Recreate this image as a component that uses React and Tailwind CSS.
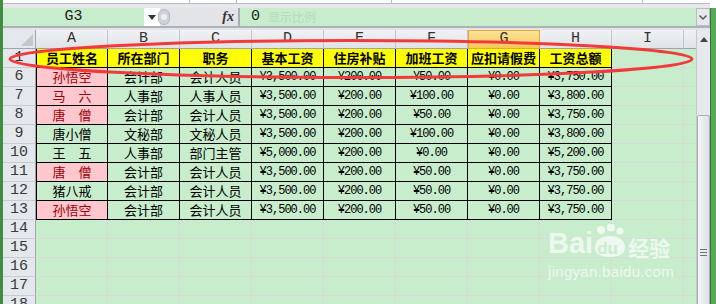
import React from "react";

const cols = ["A", "B", "C", "D", "E", "F", "G", "H", "I"];
const headers = ["员工姓名", "所在部门", "职务", "基本工资", "住房补贴", "加班工资", "应扣请假费", "工资总额"];

const rows = [
  [6, "孙悟空", true, "会计部", "会计人员", "¥3,500.00", "¥200.00", "¥50.00", "¥0.00", "¥3,750.00"],
  [7, "马　六", true, "人事部", "人事人员", "¥3,500.00", "¥200.00", "¥100.00", "¥0.00", "¥3,800.00"],
  [8, "唐　僧", true, "会计部", "会计人员", "¥3,500.00", "¥200.00", "¥50.00", "¥0.00", "¥3,750.00"],
  [9, "唐小僧", false, "文秘部", "文秘人员", "¥3,500.00", "¥200.00", "¥100.00", "¥0.00", "¥3,800.00"],
  [10, "王　五", false, "人事部", "部门主管", "¥5,000.00", "¥200.00", "¥0.00", "¥0.00", "¥5,200.00"],
  [11, "唐　僧", true, "会计部", "会计人员", "¥3,500.00", "¥200.00", "¥50.00", "¥0.00", "¥3,750.00"],
  [12, "猪八戒", false, "会计部", "会计人员", "¥3,500.00", "¥200.00", "¥50.00", "¥0.00", "¥3,750.00"],
  [13, "孙悟空", true, "会计部", "会计人员", "¥3,500.00", "¥200.00", "¥50.00", "¥0.00", "¥3,750.00"],
];

const cjk = "font-['Noto_Sans_CJK_SC',sans-serif]";
const mono = "font-['Liberation_Mono',monospace]";

const RowHead = ({ n }) => (
  <div className={`flex items-center justify-center bg-[#e4e7eb] border-r border-b border-r-[#9ea4ac] border-b-[#c8ccd2] text-[15px] text-[#3a3a3a] ${mono}`}>
    {n}
  </div>
);

const Empty = () => <div className="bg-[#c7edcc] border-r border-b border-[#d7dbd8]" />;

const Edge = () => <div className="bg-[#c7edcc] border-b border-[#d7dbd8]" />;

const App = () => {
  return (
    <div className="relative w-[716px] h-[304px] overflow-hidden flex bg-white">
      <div className="w-[3px] shrink-0 bg-[#3f8f3f]" />

      <div className="flex flex-col w-[707px] shrink-0">
        {/* ribbon remains */}
        <div className="h-[4px] shrink-0 bg-white border-b border-[#b9bdc3] flex">
          <div className="w-[187px] border-r border-[#b9bdc3]" />
          <div className="w-[47px] border-r border-[#b9bdc3]" />
          <div className="w-[155px] border-r border-[#b9bdc3]" />
          <div className="w-[251px] border-r border-[#b9bdc3]" />
        </div>
        <div className="h-[4px] shrink-0 bg-[#e6e8eb]" />

        {/* formula bar */}
        <div className="h-[18px] shrink-0 flex bg-[#c7edcc]">
          <div className={`w-[141px] flex items-center justify-center text-[15px] text-[#222] ${mono}`}>G3</div>
          <div className="w-[16px] bg-white flex items-center justify-center">
            <svg width="8" height="5" viewBox="0 0 8 5"><path d="M0 0h8L4 5z" fill="#333" /></svg>
          </div>
          <div className="w-[78px] bg-[#e2e4e8] flex items-center">
            <div className="w-[12px] h-[16px] rounded-full bg-[#cfd2d6] border border-[#b3b7bc] -ml-[2px] flex items-center justify-center">
              <div className="w-[6px] h-[6px] rounded-full bg-[#eceef0]" />
            </div>
            <span className="ml-auto mr-[4px] font-['Liberation_Serif',serif] italic font-bold text-[14px] text-[#333] leading-none">fx</span>
          </div>
          <div className="w-[2px] bg-[#a9adb3]" />
          <div className="flex-1 flex items-center pl-[11px]">
            <span className={`text-[15px] text-[#222] ${mono}`}>0</span>
            <span className={`ml-[8px] text-[12px] text-[#b8d9bc] ${cjk}`}>显示比例</span>
          </div>
          <div className="w-[14px] bg-[#e6e8eb] border border-[#b9bdc3] flex items-center justify-center">
            <svg width="8" height="5" viewBox="0 0 8 5"><path d="M0.5 0.5L4 4L7.5 0.5" stroke="#555" strokeWidth="1.4" fill="none" /></svg>
          </div>
        </div>
        <div className="h-[4px] shrink-0 bg-[#e3e5e8] border-t-2 border-[#adb2b8]" />

        <div className="flex shrink-0">
          {/* sheet */}
          <div className="grid grid-cols-[33px_repeat(9,72px)_12px] auto-rows-[19px] w-[693px] shrink-0">
            <div className="bg-[#e4e7eb] border-r border-b border-[#9ea4ac] relative">
              <svg className="absolute right-[2px] bottom-[2px]" width="12" height="12" viewBox="0 0 12 12">
                <path d="M12 0V12H0z" fill="#c3c7cc" />
              </svg>
            </div>
            {cols.map((c) => (
              <div
                key={c}
                className={
                  c === "G"
                    ? `flex items-center justify-center bg-gradient-to-b from-[#fbe39a] to-[#f6c856] border border-[#e9a63a] text-[15px] text-[#333] ${mono}`
                    : `flex items-center justify-center bg-gradient-to-b from-[#f0f2f4] to-[#e0e3e7] border-r border-b border-r-[#c3c7cd] border-b-[#9ea4ac] text-[15px] text-[#333] ${mono}`
                }
              >
                {c}
              </div>
            ))}
            <div className="bg-gradient-to-b from-[#f0f2f4] to-[#e0e3e7] border-b border-[#9ea4ac]" />

            {/* row 1 */}
            <RowHead n={1} />
            {headers.map((h, i) => (
              <div
                key={h}
                className={`flex items-center justify-center bg-[#ffff00] border-r border-b border-black font-bold text-[13px] text-black ${cjk} ${i === 0 ? "border-l" : ""}`}
              >
                {h}
              </div>
            ))}
            <Empty />
            <Edge />

            {rows.map((r) => (
              <React.Fragment key={r[0]}>
                <RowHead n={r[0]} />
                <div
                  className={`flex items-center justify-center border-l border-r border-b border-black text-[13px] ${cjk} ${
                    r[2] ? "bg-[#ffc7ce] text-[#9c0006]" : "bg-[#c7edcc] text-black"
                  }`}
                >
                  {r[1]}
                </div>
                {r.slice(3).map((v, i) => (
                  <div
                    key={i}
                    className={`flex items-center justify-center bg-[#c7edcc] border-r border-b border-black text-black ${
                      i < 2 ? `text-[13px] ${cjk}` : `text-[12px] tracking-[-1px] ${mono}`
                    }`}
                  >
                    {v}
                  </div>
                ))}
                <Empty />
                <Edge />
              </React.Fragment>
            ))}

            {[14, 15, 16, 17, 18].map((n) => (
              <React.Fragment key={n}>
                <RowHead n={n} />
                {cols.map((c) => (
                  <Empty key={c} />
                ))}
                <Edge />
              </React.Fragment>
            ))}
          </div>

          {/* vertical scrollbar */}
          <div className="w-[14px] shrink-0 flex flex-col bg-[#e8e9ec] border-l border-[#c4c8cd]">
            <div className="h-[19px] shrink-0 flex items-center justify-center">
              <svg width="8" height="5" viewBox="0 0 8 5"><path d="M0 5h8L4 0z" fill="#444" /></svg>
            </div>
            <div className="h-[66px] shrink-0" />
            <div className="h-[200px] shrink-0 bg-gradient-to-r from-[#f4f5f7] to-[#dfe2e6] border border-[#a9aeb4] rounded-[2px] flex flex-col items-center">
              <div className="mt-[133px] flex flex-col gap-[2px]">
                <div className="w-[7px] h-px bg-[#6c7178]" />
                <div className="w-[7px] h-px bg-[#6c7178]" />
                <div className="w-[7px] h-px bg-[#6c7178]" />
              </div>
            </div>
          </div>
        </div>
      </div>

      <div className="w-[6px] shrink-0 flex flex-col">
        <div className="h-[8px] shrink-0 bg-white" />
        <div className="flex-1 bg-[#58a858] border-l border-[#2f7a2f]" />
      </div>

      {/* red annotation ellipse */}
      <svg className="absolute left-0 top-0 pointer-events-none" width="716" height="304" viewBox="0 0 716 304">
        <ellipse cx="351" cy="59" rx="341" ry="18.5" fill="none" stroke="#f23a3a" strokeWidth="3" />
      </svg>

      {/* watermark */}
      <div className="absolute left-[548px] top-[228px] text-white/70 pointer-events-none">
        <div className="flex items-end">
          <span className="font-['Liberation_Sans',sans-serif] font-bold text-[29px] leading-none">Bai</span>
          <div className="relative w-[34px] h-[30px]">
            <svg className="absolute left-0 -top-[4px]" width="34" height="34" viewBox="0 0 34 34">
              <circle cx="8" cy="6" r="4" fill="rgba(255,255,255,0.7)" />
              <circle cx="18" cy="3.5" r="4" fill="rgba(255,255,255,0.7)" />
              <circle cx="27" cy="7" r="3.5" fill="rgba(255,255,255,0.7)" />
              <path d="M2 24c0-8 6-12 15-12s15 4 15 12c0 6-6 9-15 9S2 30 2 24z" fill="rgba(255,255,255,0.7)" />
            </svg>
            <span className="absolute left-[4px] bottom-[1px] font-['Liberation_Sans',sans-serif] font-bold text-[17px] leading-none text-[#c7edcc]">du</span>
          </div>
          <span className={`ml-[1px] text-[21px] leading-none font-bold ${cjk}`}>经验</span>
        </div>
        <div className="mt-[6px] font-['Liberation_Sans',sans-serif] text-[15px] leading-none tracking-[0.3px]">jingyan.baidu.com</div>
      </div>
    </div>
  );
};

export default App;
